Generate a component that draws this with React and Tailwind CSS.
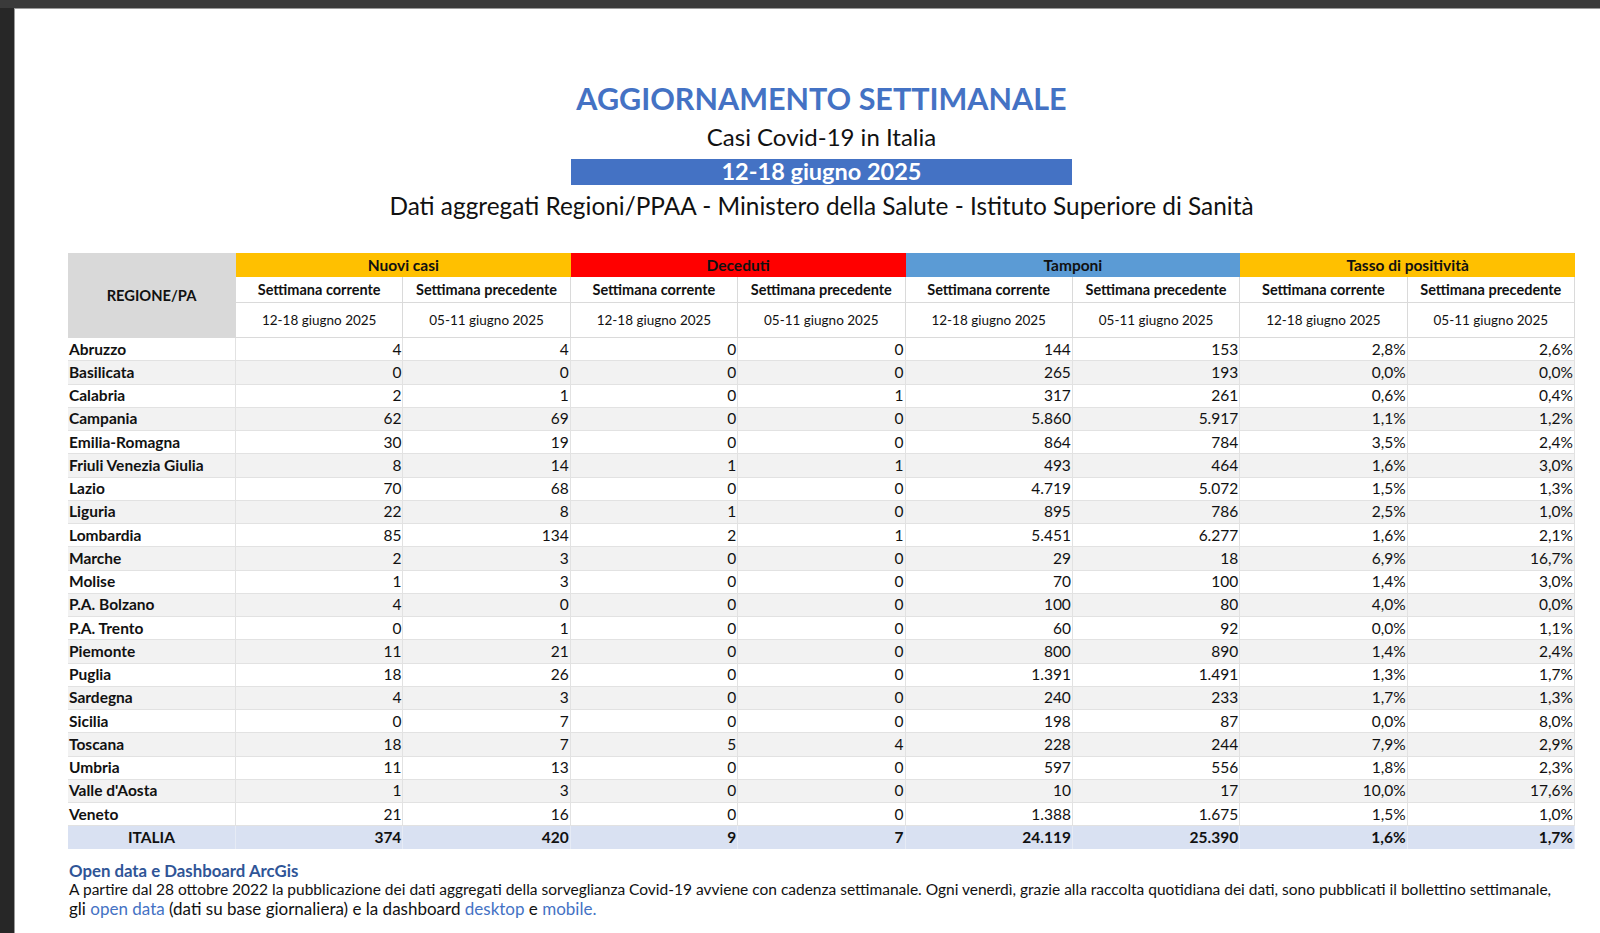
import React from "react";

const rows = [
  ["Abruzzo", "4", "4", "0", "0", "144", "153", "2,8%", "2,6%"],
  ["Basilicata", "0", "0", "0", "0", "265", "193", "0,0%", "0,0%"],
  ["Calabria", "2", "1", "0", "1", "317", "261", "0,6%", "0,4%"],
  ["Campania", "62", "69", "0", "0", "5.860", "5.917", "1,1%", "1,2%"],
  ["Emilia-Romagna", "30", "19", "0", "0", "864", "784", "3,5%", "2,4%"],
  ["Friuli Venezia Giulia", "8", "14", "1", "1", "493", "464", "1,6%", "3,0%"],
  ["Lazio", "70", "68", "0", "0", "4.719", "5.072", "1,5%", "1,3%"],
  ["Liguria", "22", "8", "1", "0", "895", "786", "2,5%", "1,0%"],
  ["Lombardia", "85", "134", "2", "1", "5.451", "6.277", "1,6%", "2,1%"],
  ["Marche", "2", "3", "0", "0", "29", "18", "6,9%", "16,7%"],
  ["Molise", "1", "3", "0", "0", "70", "100", "1,4%", "3,0%"],
  ["P.A. Bolzano", "4", "0", "0", "0", "100", "80", "4,0%", "0,0%"],
  ["P.A. Trento", "0", "1", "0", "0", "60", "92", "0,0%", "1,1%"],
  ["Piemonte", "11", "21", "0", "0", "800", "890", "1,4%", "2,4%"],
  ["Puglia", "18", "26", "0", "0", "1.391", "1.491", "1,3%", "1,7%"],
  ["Sardegna", "4", "3", "0", "0", "240", "233", "1,7%", "1,3%"],
  ["Sicilia", "0", "7", "0", "0", "198", "87", "0,0%", "8,0%"],
  ["Toscana", "18", "7", "5", "4", "228", "244", "7,9%", "2,9%"],
  ["Umbria", "11", "13", "0", "0", "597", "556", "1,8%", "2,3%"],
  ["Valle d'Aosta", "1", "3", "0", "0", "10", "17", "10,0%", "17,6%"],
  ["Veneto", "21", "16", "0", "0", "1.388", "1.675", "1,5%", "1,0%"],
];
const total = ["ITALIA", "374", "420", "9", "7", "24.119", "25.390", "1,6%", "1,7%"];

const groups = [
  { name: "Nuovi casi", cls: "bg-[#ffc000]" },
  { name: "Deceduti", cls: "bg-[#ff0000]" },
  { name: "Tamponi", cls: "bg-[#5b9bd5]" },
  { name: "Tasso di positività", cls: "bg-[#ffc000]" },
];

const font = { fontFamily: "Lato, 'Open Sans', sans-serif" };

export default function App() {
  return (
    <div className="w-[1600px] h-[933px] overflow-hidden flex flex-col bg-[#272727]" style={font}>
      <div className="h-[8px] bg-[#3a3a3a] shrink-0" />
      <div className="flex flex-1 min-h-0">
        <div className="w-[14px] bg-[#272727] shrink-0" />
        <div className="flex-1 bg-white border-l border-t border-[#9a9a9a] min-h-0 overflow-hidden">
          <div className="ml-[53px] w-[1507px] flex flex-col">
            {/* Titles */}
            <div className="mt-[70px] h-[40px] flex items-center justify-center text-[30.5px] font-bold text-[#4472c4]">
              AGGIORNAMENTO SETTIMANALE
            </div>
            <div className="mt-[2px] h-[32px] flex items-center justify-center text-[24px] text-[#111]">
              Casi Covid-19 in Italia
            </div>
            <div className="mt-[6px] self-center w-[501px] h-[26px] bg-[#4472c4] flex items-center justify-center text-[23.5px] font-bold text-white">
              12-18 giugno 2025
            </div>
            <div className="mt-[6px] h-[30px] flex items-center justify-center text-[24.4px] text-[#111]">
              Dati aggregati Regioni/PPAA - Ministero della Salute - Istituto Superiore di Sanità
            </div>

            {/* Table */}
            <div className="mt-[32px] grid grid-cols-[168px_repeat(8,167.375px)] text-[15.5px] text-[#111]">
              <div className="row-span-3 bg-[#d9d9d9] flex items-center justify-center font-bold text-[14.7px] border-r border-[#d9d9d9]">
                REGIONE/PA
              </div>
              {groups.map((g) => (
                <div
                  key={g.name}
                  className={`col-span-2 h-[24px] pt-[1px] flex items-center justify-center font-bold text-[15.5px] ${g.cls}`}
                >
                  {g.name}
                </div>
              ))}
              {groups.map((g) => (
                <React.Fragment key={g.name + "a"}>
                  <div className="h-[26px] flex items-center justify-center font-bold text-[14.5px] border-r border-b border-[#dadada]">
                    Settimana corrente
                  </div>
                  <div className="h-[26px] flex items-center justify-center font-bold text-[14.5px] border-r border-b border-[#dadada]">
                    Settimana precedente
                  </div>
                </React.Fragment>
              ))}
              {groups.map((g) => (
                <React.Fragment key={g.name + "b"}>
                  <div className="h-[35px] flex items-center justify-center border-r border-b border-[#dadada] text-[13.5px]">
                    12-18 giugno 2025
                  </div>
                  <div className="h-[35px] flex items-center justify-center border-r border-b border-[#dadada] text-[13.5px]">
                    05-11 giugno 2025
                  </div>
                </React.Fragment>
              ))}
              {rows.map((r, i) => (
                <React.Fragment key={r[0]}>
                  {r.map((c, j) => (
                    <div
                      key={j}
                      className={`h-[23.25px] flex items-center border-r border-b border-[#e2e2e2] ${
                        i % 2 === 1 ? "bg-[#f2f2f2]" : "bg-white"
                      } ${j === 0 ? "justify-start pl-[1px] font-bold" : "justify-end pr-[1px]"}`}
                    >
                      {c}
                    </div>
                  ))}
                </React.Fragment>
              ))}
              {total.map((c, j) => (
                <div
                  key={"t" + j}
                  className={`h-[23px] flex items-center bg-[#d9e1f2] font-bold border-r border-[#e6ebf5] ${
                    j === 0 ? "justify-center" : "justify-end pr-[1px]"
                  }`}
                >
                  {c}
                </div>
              ))}
            </div>

            {/* Footer */}
            <div className="mt-[12px] pl-[1px] text-[15.5px] leading-[19px] text-[#111]">
              <div className="font-bold text-[#2f5597] text-[16.8px]">Open data e Dashboard ArcGis</div>
              <div className="whitespace-nowrap">
                A partire dal 28 ottobre 2022 la pubblicazione dei dati aggregati della sorveglianza Covid-19 avviene con cadenza settimanale. Ogni venerdì, grazie alla raccolta quotidiana dei dati, sono pubblicati il bollettino settimanale,
              </div>
              <div className="text-[17px] whitespace-nowrap">
                gli <span className="text-[#4472c4]">open data</span> (dati su base giornaliera) e la dashboard{" "}
                <span className="text-[#4472c4]">desktop</span> e <span className="text-[#4472c4]">mobile.</span>
              </div>
            </div>
          </div>
        </div>
      </div>
    </div>
  );
}
